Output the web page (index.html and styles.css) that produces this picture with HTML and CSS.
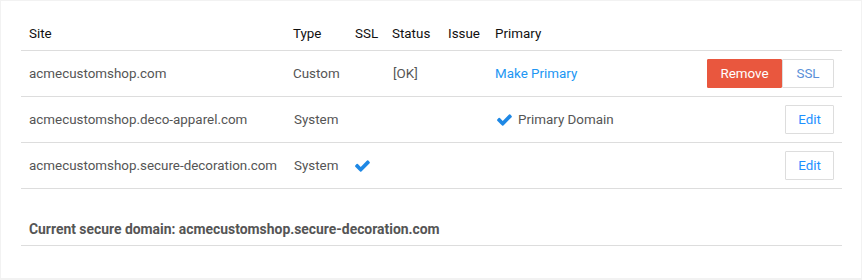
FILE: index.html
```html
<!DOCTYPE html>
<html>
<head>
<meta charset="utf-8">
<link rel="stylesheet" href="styles.css">
</head>
<body>
<div class="card">
  <div class="row head">
    <div class="c">Site</div>
    <div class="c">Type</div>
    <div class="c">SSL</div>
    <div class="c">Status</div>
    <div class="c">Issue</div>
    <div class="c">Primary</div>
    <div class="c"></div>
  </div>
  <div class="row">
    <div class="c">acmecustomshop.com</div>
    <div class="c">Custom</div>
    <div class="c"></div>
    <div class="c ok">[OK]</div>
    <div class="c"></div>
    <div class="c"><a class="link">Make Primary</a></div>
    <div class="c actions"><button class="btn danger">Remove</button><button class="btn plain ssl">SSL</button></div>
  </div>
  <div class="row">
    <div class="c">acmecustomshop.deco-apparel.com</div>
    <div class="c sys">System</div>
    <div class="c"></div>
    <div class="c"></div>
    <div class="c"></div>
    <div class="c prim"><svg class="check" viewBox="120 350 1560 1145"><path d="M1671 566q0 40-28 68l-724 724-136 136q-28 28-68 28t-68-28l-136-136-362-362q-28-28-28-68t28-68l136-136q28-28 68-28t68 28l294 295 656-657q28-28 68-28t68 28l136 136q28 28 28 68z"/></svg>Primary Domain</div>
    <div class="c actions"><button class="btn plain">Edit</button></div>
  </div>
  <div class="row">
    <div class="c">acmecustomshop.secure-decoration.com</div>
    <div class="c sys">System</div>
    <div class="c"><svg class="check" viewBox="120 350 1560 1145"><path d="M1671 566q0 40-28 68l-724 724-136 136q-28 28-68 28t-68-28l-136-136-362-362q-28-28-28-68t28-68l136-136q28-28 68-28t68 28l294 295 656-657q28-28 68-28t68 28l136 136q28 28 28 68z"/></svg></div>
    <div class="c"></div>
    <div class="c"></div>
    <div class="c"></div>
    <div class="c actions"><button class="btn plain">Edit</button></div>
  </div>
  <div class="foot">Current secure domain: acmecustomshop.secure-decoration.com</div>
</div>
</body>
</html>
```

FILE: styles.css
```css
html, body { margin: 0; padding: 0; }
body {
  background: #f2f2f2;
  font-family: Roboto, "Noto Sans", Arial, sans-serif;
  font-size: 13.4px;
  color: #555;
  width: 862px;
  height: 280px;
  overflow: hidden;
}
.card {
  margin: 1px 0 0 1px;
  width: 860px;
  height: 277px;
  background: #fff;
  padding: 16px 19px 0 20px;
  box-sizing: border-box;
}
.row {
  display: grid;
  grid-template-columns: 264px 62px 37px 56px 47px 1fr auto;
  align-items: center;
  height: 46px;
  border-bottom: 1px solid #ddd;
  box-sizing: border-box;
}
.row.head {
  height: 34px;
  color: #111;
}
.c {
  padding: 0 8px;
  white-space: nowrap;
  display: flex;
  align-items: center;
}
.sys { padding-left: 9px; }
.ok { padding-left: 9px; }
.link { color: #2196f3; cursor: pointer; }
.prim { padding-left: 10px; }
.check {
  width: 15px;
  height: 12px;
  fill: #1e88e5;
  margin-right: 6px;
}
.actions { justify-content: flex-end; }
.btn {
  font-family: Roboto, "Noto Sans", Arial, sans-serif;
  font-size: 13.4px;
  height: 29px;
  padding: 0 14px;
  border: 1px solid #ddd;
  background: #fff;
  color: #1e90ff;
  border-radius: 1px;
  margin: 0;
  cursor: pointer;
}
.btn.danger {
  background: #e9573e;
  border-color: #e9573e;
  color: #fff;
  width: 75px;
  padding: 0;
}
.btn.plain.ssl { width: 52px; padding: 0; color: #5a8fd8; }
.btn.plain { width: 49px; padding: 0; }
.foot {
  margin-top: 21px;
  height: 36px;
  box-sizing: border-box;
  border-bottom: 1px solid #ddd;
  padding: 0 8px 8px;
  display: flex;
  align-items: flex-end;
  font-weight: bold;
  font-size: 13.9px;
  color: #555;
}
```
